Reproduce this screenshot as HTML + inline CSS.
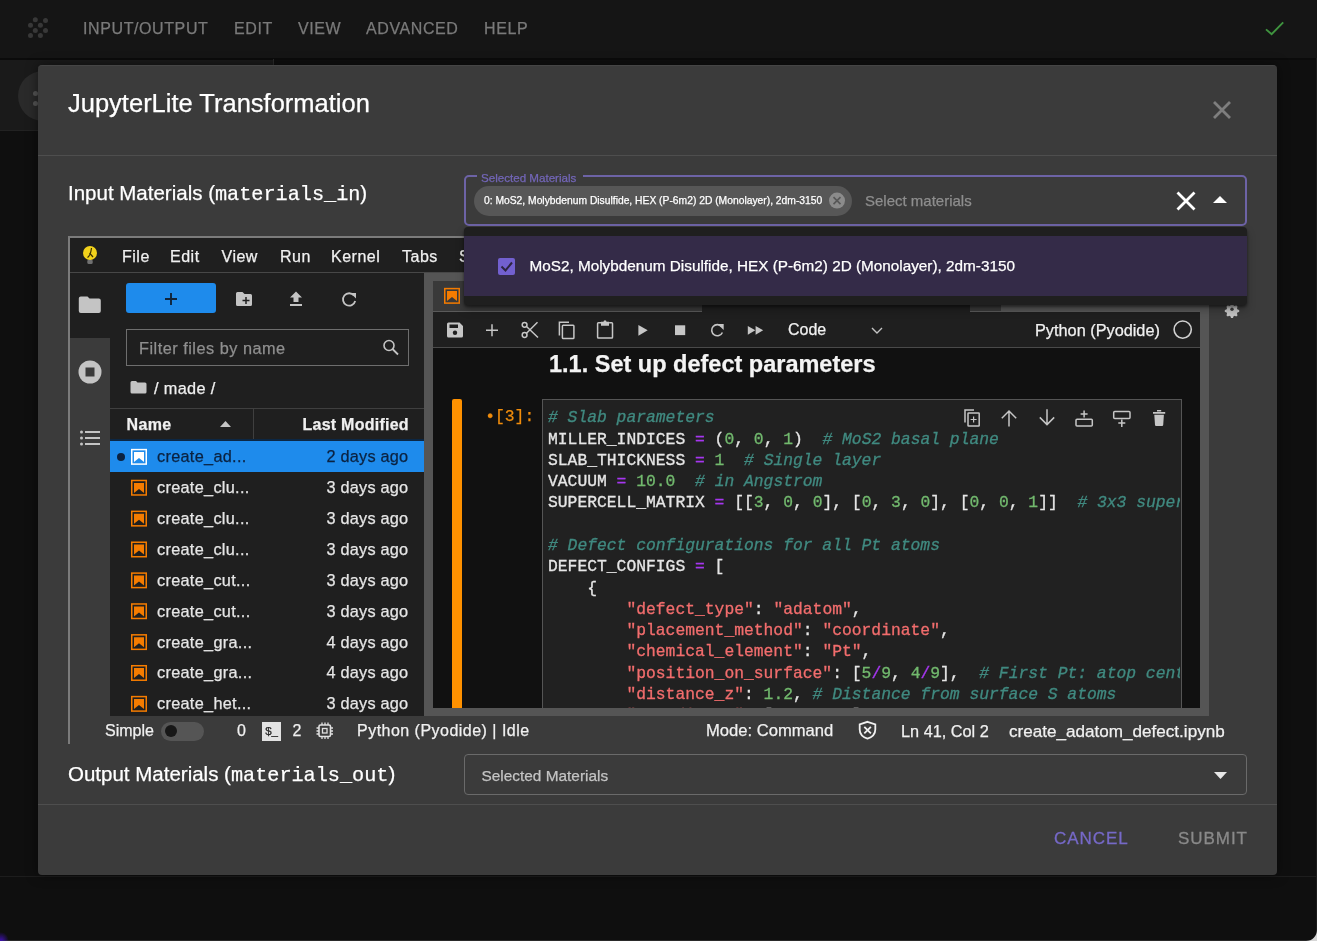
<!DOCTYPE html>
<html><head><meta charset="utf-8">
<style>
html,body{margin:0;padding:0}
body{-webkit-font-smoothing:antialiased;width:1317px;height:941px;overflow:hidden;position:relative;background:#0f0f0f;font-family:"Liberation Sans",sans-serif;color:#fff}
.a{position:absolute}
.t{position:absolute;white-space:pre;line-height:1;-webkit-text-stroke:0.25px currentColor}
#codelines{-webkit-text-stroke:0.3px currentColor}
.mono{font-family:"Liberation Mono",monospace}
.cl{height:21.27px;white-space:pre}
.c{color:#408a80;font-style:italic}
.o{color:#a637f0}
.n{color:#72b96e}
.s{color:#f26d6d}
svg{position:absolute;overflow:visible}
</style></head><body><div id="wrap" style="position:absolute;left:0;top:0;width:1317px;height:941px;will-change:transform">
<!-- background app -->
<div class="a" style="left:0;top:0;width:1317px;height:58px;background:#151515"></div>
<div class="a" style="left:0;top:58px;width:1317px;height:2px;background:#0b0b0b"></div>
<div class="a" style="left:0;top:60px;width:273px;height:70px;background:#1a1a1a"></div>
<div class="a" style="left:0;top:130px;width:273px;height:1px;background:#222"></div>
<div class="a" style="left:1316px;top:58px;width:1px;height:883px;background:#1c1c1c"></div>
<div class="a" style="left:0;top:876px;width:1317px;height:1px;background:#1d1d1d"></div>
<div class="a" style="left:0;top:940px;width:1317px;height:1px;background:#2a2a2a"></div>
<div class="a" style="left:273px;top:59px;width:1px;height:8px;background:#2c2c2c"></div>
<div class="a" style="left:18px;top:71px;width:50px;height:50px;border-radius:50%;background:#2a2a2a"></div>
<div class="a" style="left:33px;top:91px;width:5px;height:5px;border-radius:50%;background:#555"></div>
<div class="a" style="left:33px;top:101px;width:5px;height:5px;border-radius:50%;background:#555"></div>
<div id="topmenu">
<span class="t" style="left:83px;top:21px;font-size:16px;letter-spacing:0.6px;color:#7a7a7a">INPUT/OUTPUT</span>
<span class="t" style="left:234px;top:21px;font-size:16px;letter-spacing:0.6px;color:#7a7a7a">EDIT</span>
<span class="t" style="left:298px;top:21px;font-size:16px;letter-spacing:0.6px;color:#7a7a7a">VIEW</span>
<span class="t" style="left:366px;top:21px;font-size:16px;letter-spacing:0.6px;color:#7a7a7a">ADVANCED</span>
<span class="t" style="left:484px;top:21px;font-size:16px;letter-spacing:0.6px;color:#7a7a7a">HELP</span>
</div>
<svg style="left:0;top:0" width="1317" height="60">
 <g fill="#383838">
  <circle cx="35.3" cy="19.8" r="2.5"/><circle cx="45.5" cy="20.5" r="2.5"/>
  <circle cx="30.5" cy="25.3" r="2.5"/><circle cx="40.4" cy="25.3" r="2.5"/>
  <circle cx="35.3" cy="30.4" r="2.5"/><circle cx="45.5" cy="30.4" r="2.5"/>
  <circle cx="30.5" cy="35.5" r="2.5"/><circle cx="40.4" cy="35.5" r="2.5"/>
 </g>
 <path d="M1266 29.4 L1271.6 34.2 L1283.2 22.3" fill="none" stroke="#3f943f" stroke-width="1.9"/>
</svg>

<!-- modal -->
<div class="a" style="left:38px;top:64.5px;width:1239px;height:810.5px;background:#3b3b3b;border-radius:4px;box-shadow:0 0 12px rgba(0,0,0,.5);border-top:1px solid #454545;box-sizing:border-box"></div>
<span class="t" style="left:68px;top:91.3px;font-size:25.5px;color:#fff">JupyterLite Transformation</span>
<svg style="left:0;top:0" width="1317" height="200">
 <path d="M1214 102 L1230 118 M1230 102 L1214 118" stroke="#7e7e7e" stroke-width="2.8"/>
</svg>
<div class="a" style="left:38px;top:155px;width:1239px;height:1px;background:#4e4e4e"></div>
<span class="t" style="left:68px;top:183.2px;font-size:20.5px">Input Materials (<span class="mono" style="font-size:20.2px">materials_in</span>)</span>

<!-- JupyterLite iframe -->
<div class="a" style="left:68px;top:236px;width:1179px;height:2px;background:#7b7b7b"></div>
<div class="a" style="left:68px;top:236px;width:2px;height:508px;background:#7b7b7b"></div>
<!-- menubar -->
<div class="a" style="left:70px;top:238px;width:1177px;height:34px;background:#1f1f1f"></div>
<div class="a" style="left:70px;top:272px;width:1177px;height:1px;background:#474747"></div>
<svg style="left:0;top:0" width="1" height="1">
 <rect x="87.3" y="259.5" width="5.4" height="4.5" rx="1.5" fill="#707070"/>
 <circle cx="90" cy="253" r="7" fill="#f2d21b"/>
 <path d="M91.5 248 C91 252 90 256 87.5 257.5 M89.5 253 L93 257" stroke="#3a3000" stroke-width="1.2" fill="none"/>
</svg>
<span class="t" style="left:122px;top:248.5px;font-size:16px;letter-spacing:0.5px;color:#f0f0f0">File</span>
<span class="t" style="left:170px;top:248.5px;font-size:16px;letter-spacing:0.5px;color:#f0f0f0">Edit</span>
<span class="t" style="left:221.5px;top:248.5px;font-size:16px;letter-spacing:0.5px;color:#f0f0f0">View</span>
<span class="t" style="left:280px;top:248.5px;font-size:16px;letter-spacing:0.5px;color:#f0f0f0">Run</span>
<span class="t" style="left:331px;top:248.5px;font-size:16px;letter-spacing:0.5px;color:#f0f0f0">Kernel</span>
<span class="t" style="left:402px;top:248.5px;font-size:16px;letter-spacing:0.5px;color:#f0f0f0">Tabs</span>
<span class="t" style="left:459px;top:248.5px;font-size:16px;letter-spacing:0.5px;color:#f0f0f0">Settings</span>
<!-- left sidebar -->
<div class="a" style="left:70px;top:273px;width:40px;height:65px;background:#1f1f1f"></div>
<div class="a" style="left:70px;top:338px;width:40px;height:406px;background:#3b3b3b"></div>
<svg style="left:0;top:0" width="1" height="1">
 <path d="M80.8 296.6 h6.7 l2 2 h9.3 a2 2 0 0 1 2 2 v10.4 a2 2 0 0 1 -2 2 h-18 a2 2 0 0 1 -2 -2 v-12.4 a2 2 0 0 1 2 -2 z" fill="#c4c4c4"/>
 <circle cx="90" cy="372" r="11.5" fill="#c4c4c4"/>
 <rect x="85.5" y="367.5" width="9" height="9" fill="#3b3b3b"/>
 <g fill="#c4c4c4"><circle cx="81.5" cy="432" r="1.5"/><circle cx="81.5" cy="438" r="1.5"/><circle cx="81.5" cy="444" r="1.5"/>
 <rect x="85" y="431" width="15" height="2"/><rect x="85" y="437" width="15" height="2"/><rect x="85" y="443" width="15" height="2"/></g>
</svg>
<!-- file browser -->
<div class="a" style="left:110px;top:273px;width:314px;height:443px;background:#1f1f1f"></div>
<div class="a" style="left:126px;top:283px;width:90px;height:30px;background:#1e8bec;border-radius:3px"></div>
<svg style="left:0;top:0" width="1" height="1">
 <path d="M165 299 h12 M171 293 v12" stroke="#10243a" stroke-width="1.9"/>
 <path d="M237.5 292 h5 l2 2 h6 a1.5 1.5 0 0 1 1.5 1.5 v9 a1.5 1.5 0 0 1 -1.5 1.5 h-13 a1.5 1.5 0 0 1 -1.5 -1.5 v-11 a1.5 1.5 0 0 1 1.5 -1.5 z" fill="#c4c4c4"/>
 <path d="M242.5 300.5 h7 M246 297 v7" stroke="#1f1f1f" stroke-width="1.5"/>
 <path d="M296 291.5 l6 6 h-3.5 v4.5 h-5 v-4.5 h-3.5 z" fill="#c4c4c4"/>
 <rect x="290" y="304" width="12" height="2" fill="#c4c4c4"/>
 <path d="M354 295.5 A6.2 6.2 0 1 0 355.2 301" fill="none" stroke="#c4c4c4" stroke-width="1.8"/>
 <path d="M350.5 293 h5.5 v5.5 z" fill="#c4c4c4"/>
</svg>
<div class="a" style="left:126px;top:329px;width:281px;height:35px;border:1px solid #6e6e6e"></div>
<span class="t" style="left:139px;top:339.5px;font-size:16.3px;letter-spacing:0.5px;color:#8f8f8f">Filter files by name</span>
<svg style="left:0;top:0" width="1" height="1">
 <circle cx="389" cy="345.5" r="5" fill="none" stroke="#c4c4c4" stroke-width="1.6"/>
 <path d="M392.5 349 L398 354.5" stroke="#c4c4c4" stroke-width="1.8"/>
 <path d="M131 381 h5 l1.5 1.5 h7.5 a1.5 1.5 0 0 1 1.5 1.5 v8 a1.5 1.5 0 0 1 -1.5 1.5 h-13 a1.5 1.5 0 0 1 -1.5 -1.5 v-9.5 a1.5 1.5 0 0 1 1.5 -1.5 z" fill="#c4c4c4"/>
</svg>
<span class="t" style="left:154px;top:379.5px;font-size:16.3px;letter-spacing:0.35px;color:#f0f0f0">/ made /</span>
<div class="a" style="left:110px;top:408px;width:314px;height:1px;background:#3f3f3f"></div>
<div class="a" style="left:253px;top:409px;width:1px;height:31px;background:#3f3f3f"></div>
<div class="a" style="left:110px;top:439px;width:314px;height:2px;background:#0c2744"></div>
<span class="t" style="left:126.5px;top:416.5px;font-size:16px;font-weight:bold;letter-spacing:0.35px;color:#f0f0f0">Name</span>
<svg style="left:0;top:0" width="1" height="1"><path d="M220 427 h11 l-5.5 -6 z" fill="#c4c4c4"/></svg>
<span class="t" style="left:302.5px;top:416.5px;font-size:16px;font-weight:bold;letter-spacing:0.25px;color:#f0f0f0">Last Modified</span>
<div class="a" style="left:110px;top:441.000px;width:314px;height:30.875px;background:#1e8bec"></div>
<div class="a" style="left:117px;top:452.500px;width:8px;height:8px;border-radius:50%;background:#0b2240"></div>
<svg style="left:0;top:0" width="1" height="1"><rect x="131.75" y="449.60" width="14.5" height="14.5" fill="none" stroke="#fff" stroke-width="1.5"/><path d="M134 452.00 h10 v10 l-5 -4 l-5 4 z" fill="#fff"/></svg>
<span class="t" style="left:157px;top:448.300px;font-size:16.3px;letter-spacing:0.3px;color:#0b2240">create_ad...</span>
<span class="t" style="left:326.6px;top:448.300px;font-size:16.3px;letter-spacing:0.2px;color:#0b2240">2 days ago</span>
<svg style="left:0;top:0" width="1" height="1"><rect x="131.75" y="480.48" width="14.5" height="14.5" fill="none" stroke="#f57c00" stroke-width="1.5"/><path d="M134 482.88 h10 v10 l-5 -4 l-5 4 z" fill="#f57c00"/></svg>
<span class="t" style="left:157px;top:479.175px;font-size:16.3px;letter-spacing:0.3px;color:#e6e6e6">create_clu...</span>
<span class="t" style="left:326.6px;top:479.175px;font-size:16.3px;letter-spacing:0.2px;color:#e6e6e6">3 days ago</span>
<svg style="left:0;top:0" width="1" height="1"><rect x="131.75" y="511.35" width="14.5" height="14.5" fill="none" stroke="#f57c00" stroke-width="1.5"/><path d="M134 513.75 h10 v10 l-5 -4 l-5 4 z" fill="#f57c00"/></svg>
<span class="t" style="left:157px;top:510.050px;font-size:16.3px;letter-spacing:0.3px;color:#e6e6e6">create_clu...</span>
<span class="t" style="left:326.6px;top:510.050px;font-size:16.3px;letter-spacing:0.2px;color:#e6e6e6">3 days ago</span>
<svg style="left:0;top:0" width="1" height="1"><rect x="131.75" y="542.23" width="14.5" height="14.5" fill="none" stroke="#f57c00" stroke-width="1.5"/><path d="M134 544.62 h10 v10 l-5 -4 l-5 4 z" fill="#f57c00"/></svg>
<span class="t" style="left:157px;top:540.925px;font-size:16.3px;letter-spacing:0.3px;color:#e6e6e6">create_clu...</span>
<span class="t" style="left:326.6px;top:540.925px;font-size:16.3px;letter-spacing:0.2px;color:#e6e6e6">3 days ago</span>
<svg style="left:0;top:0" width="1" height="1"><rect x="131.75" y="573.10" width="14.5" height="14.5" fill="none" stroke="#f57c00" stroke-width="1.5"/><path d="M134 575.50 h10 v10 l-5 -4 l-5 4 z" fill="#f57c00"/></svg>
<span class="t" style="left:157px;top:571.800px;font-size:16.3px;letter-spacing:0.3px;color:#e6e6e6">create_cut...</span>
<span class="t" style="left:326.6px;top:571.800px;font-size:16.3px;letter-spacing:0.2px;color:#e6e6e6">3 days ago</span>
<svg style="left:0;top:0" width="1" height="1"><rect x="131.75" y="603.98" width="14.5" height="14.5" fill="none" stroke="#f57c00" stroke-width="1.5"/><path d="M134 606.38 h10 v10 l-5 -4 l-5 4 z" fill="#f57c00"/></svg>
<span class="t" style="left:157px;top:602.675px;font-size:16.3px;letter-spacing:0.3px;color:#e6e6e6">create_cut...</span>
<span class="t" style="left:326.6px;top:602.675px;font-size:16.3px;letter-spacing:0.2px;color:#e6e6e6">3 days ago</span>
<svg style="left:0;top:0" width="1" height="1"><rect x="131.75" y="634.85" width="14.5" height="14.5" fill="none" stroke="#f57c00" stroke-width="1.5"/><path d="M134 637.25 h10 v10 l-5 -4 l-5 4 z" fill="#f57c00"/></svg>
<span class="t" style="left:157px;top:633.550px;font-size:16.3px;letter-spacing:0.3px;color:#e6e6e6">create_gra...</span>
<span class="t" style="left:326.6px;top:633.550px;font-size:16.3px;letter-spacing:0.2px;color:#e6e6e6">4 days ago</span>
<svg style="left:0;top:0" width="1" height="1"><rect x="131.75" y="665.73" width="14.5" height="14.5" fill="none" stroke="#f57c00" stroke-width="1.5"/><path d="M134 668.12 h10 v10 l-5 -4 l-5 4 z" fill="#f57c00"/></svg>
<span class="t" style="left:157px;top:664.425px;font-size:16.3px;letter-spacing:0.3px;color:#e6e6e6">create_gra...</span>
<span class="t" style="left:326.6px;top:664.425px;font-size:16.3px;letter-spacing:0.2px;color:#e6e6e6">4 days ago</span>
<svg style="left:0;top:0" width="1" height="1"><rect x="131.75" y="696.60" width="14.5" height="14.5" fill="none" stroke="#f57c00" stroke-width="1.5"/><path d="M134 699.00 h10 v10 l-5 -4 l-5 4 z" fill="#f57c00"/></svg>
<span class="t" style="left:157px;top:695.300px;font-size:16.3px;letter-spacing:0.3px;color:#e6e6e6">create_het...</span>
<span class="t" style="left:326.6px;top:695.300px;font-size:16.3px;letter-spacing:0.2px;color:#e6e6e6">3 days ago</span>
<!-- splitter / tab bar -->
<div class="a" style="left:424px;top:273px;width:785px;height:8px;background:#555"></div>
<div class="a" style="left:424px;top:273px;width:9px;height:443px;background:#555"></div>
<div class="a" style="left:433px;top:281px;width:269px;height:30px;background:#393939"></div>
<div class="a" style="left:702px;top:281px;width:268px;height:31px;background:#1f1f1f"></div>
<div class="a" style="left:970px;top:281px;width:31px;height:30px;background:#393939"></div>
<div class="a" style="left:1001px;top:281px;width:208px;height:30px;background:#555"></div>
<div class="a" style="left:433px;top:311px;width:269px;height:1px;background:#5a5a5a"></div>
<div class="a" style="left:970px;top:311px;width:239px;height:1px;background:#5a5a5a"></div>
<svg style="left:0;top:0" width="1" height="1"><rect x="444.75" y="288.6" width="14.5" height="14.5" fill="none" stroke="#f57c00" stroke-width="1.5"/><path d="M447 291 h10 v10 l-5 -4 l-5 4 z" fill="#f57c00"/></svg>
<!-- toolbar -->
<div class="a" style="left:433px;top:312px;width:767px;height:35px;background:#1f1f1f"></div>
<div class="a" style="left:433px;top:347px;width:767px;height:1px;background:#4a4a4a"></div>
<div class="a" style="left:1200px;top:281px;width:9px;height:435px;background:#555"></div>
<svg style="left:0;top:0" width="1" height="1">
 <g fill="#c6c6c6">
  <!-- save 447-463 x 322.5-337.5 -->
  <path d="M448.5 322.5 h11 l3.5 3.5 v10 a1.5 1.5 0 0 1 -1.5 1.5 h-13 a1.5 1.5 0 0 1 -1.5 -1.5 v-12 a1.5 1.5 0 0 1 1.5 -1.5 z"/>
 </g>
 <rect x="449.5" y="324.5" width="8.5" height="3.5" fill="#1f1f1f"/>
 <circle cx="455" cy="332.8" r="2.2" fill="#1f1f1f"/>
 <path d="M486 330.2 h12 M492 324.2 v12" stroke="#c6c6c6" stroke-width="1.5"/>
 <!-- scissors 521.7-538.4, 321.8-338 -->
 <g fill="none" stroke="#c6c6c6" stroke-width="1.5">
  <circle cx="524.6" cy="324.8" r="2.4"/>
  <circle cx="524.6" cy="335" r="2.4"/>
  <path d="M526.5 326.5 L538 337.5 M526.5 333.3 L537.5 322.3"/>
 </g>
 <!-- copy 558.6-574.6 321-339.3 -->
 <g fill="none" stroke="#c6c6c6" stroke-width="1.5">
  <path d="M559.4 335.5 v-13.2 h9.6"/>
  <rect x="562.4" y="325.2" width="11.5" height="13.3" rx="0.8"/>
 </g>
 <!-- paste 597.2-612.9 320.2-338.2 -->
 <g fill="none" stroke="#c6c6c6" stroke-width="1.5">
  <path d="M601 322.8 h-2.6 a0.8 0.8 0 0 0 -0.8 0.8 v13.6 a0.8 0.8 0 0 0 0.8 0.8 h13.3 a0.8 0.8 0 0 0 0.8 -0.8 v-13.6 a0.8 0.8 0 0 0 -0.8 -0.8 h-2.6"/>
 </g>
 <path d="M601 321.8 h2.5 a1.5 1.5 0 0 1 3 0 h2.5 v4 h-8 z" fill="#c6c6c6"/>
 <!-- play -->
 <path d="M638.4 324.9 L647.7 330.3 L638.4 335.7 Z" fill="#c6c6c6"/>
 <rect x="675" y="325.3" width="10.2" height="9.8" fill="#c6c6c6"/>
 <!-- restart 709.9-723.7 323.9-336.7 -->
 <path d="M721.6 326.6 A5.6 5.6 0 1 0 722.4 332.5" fill="none" stroke="#c6c6c6" stroke-width="1.6"/>
 <path d="M717.5 323.9 h6.2 v6.2 z" fill="#c6c6c6"/>
 <!-- ff -->
 <path d="M747.8 325.9 L755.3 330.3 L747.8 334.7 Z M755.6 325.9 L763.2 330.3 L755.6 334.7 Z" fill="#c6c6c6"/>
</svg>
<span class="t" style="left:788px;top:322.2px;font-size:16px;color:#f0f0f0">Code</span>
<span class="t" style="left:1035px;top:321.5px;font-size:16.3px;color:#f0f0f0">Python (Pyodide)</span>
<svg style="left:0;top:0" width="1" height="1">
 <path d="M872 328 l5 5 l5 -5" fill="none" stroke="#c4c4c4" stroke-width="1.4"/>
 <circle cx="1182.7" cy="329.6" r="8.6" fill="none" stroke="#d0d0d0" stroke-width="1.6"/>
</svg>
<!-- notebook content -->
<div class="a" style="left:433px;top:348px;width:767px;height:360px;background:#111"></div>
<div class="a" style="left:433px;top:708px;width:776px;height:8px;background:#555"></div>
<span class="t" style="left:549px;top:353px;font-size:23.5px;font-weight:bold;color:#f4f4f4">1.1. Set up defect parameters</span>
<div class="a" style="left:452px;top:399px;width:10px;height:309px;background:#ff9100;border-radius:2px 2px 0 0"></div>
<div class="a" style="left:433px;top:348px;width:767px;height:360px;overflow:hidden">
<div class="a" style="left:109px;top:51px;width:640px;height:340px;background:#212121;border:1px solid #555;box-sizing:border-box"></div>
<span class="t mono" style="left:52.2px;top:61px;font-size:16.33px;color:#f08c0c">&#8226;[3]:</span>
<div class="a mono" id="codelines" style="left:115px;top:59.4px;width:632px;height:320px;overflow:hidden;font-size:16.33px;line-height:21.27px;color:#e6e6e6">
<div class="cl"><span class="c"># Slab parameters</span></div>
<div class="cl"><span class="v">MILLER_INDICES </span><span class="o">=</span> (<span class="n">0</span>, <span class="n">0</span>, <span class="n">1</span>)  <span class="c"># MoS2 basal plane</span></div>
<div class="cl"><span class="v">SLAB_THICKNESS </span><span class="o">=</span> <span class="n">1</span>  <span class="c"># Single layer</span></div>
<div class="cl"><span class="v">VACUUM </span><span class="o">=</span> <span class="n">10.0</span>  <span class="c"># in Angstrom</span></div>
<div class="cl"><span class="v">SUPERCELL_MATRIX </span><span class="o">=</span> [[<span class="n">3</span>, <span class="n">0</span>, <span class="n">0</span>], [<span class="n">0</span>, <span class="n">3</span>, <span class="n">0</span>], [<span class="n">0</span>, <span class="n">0</span>, <span class="n">1</span>]]  <span class="c"># 3x3 supercell</span></div>
<div class="cl"></div>
<div class="cl"><span class="c"># Defect configurations for all Pt atoms</span></div>
<div class="cl"><span class="v">DEFECT_CONFIGS </span><span class="o">=</span> [</div>
<div class="cl">    {</div>
<div class="cl">        <span class="s">"defect_type"</span>: <span class="s">"adatom"</span>,</div>
<div class="cl">        <span class="s">"placement_method"</span>: <span class="s">"coordinate"</span>,</div>
<div class="cl">        <span class="s">"chemical_element"</span>: <span class="s">"Pt"</span>,</div>
<div class="cl">        <span class="s">"position_on_surface"</span>: [<span class="n">5</span><span class="o">/</span><span class="n">9</span>, <span class="n">4</span><span class="o">/</span><span class="n">9</span>],  <span class="c"># First Pt: atop center</span></div>
<div class="cl">        <span class="s">"distance_z"</span>: <span class="n">1.2</span>, <span class="c"># Distance from surface S atoms</span></div>
<div class="cl">        <span class="s">"coordinate"</span>: [<span class="n">0.5</span>, <span class="n">0.5</span>],</div>
</div>
</div>
<!-- right sidebar gear -->
<svg style="left:0;top:0" width="1" height="1"><g transform="translate(1232 309.2) scale(0.78)" fill="#c4c4c4">
 <path d="M-1.3 -7 h2.6 l0.5 2 l1.7 0.9 l1.9 -0.9 l1.8 1.8 l-0.9 1.9 l0.9 1.7 l2 0.5 v2.6 l-2 0.5 l-0.9 1.7 l0.9 1.9 l-1.8 1.8 l-1.9 -0.9 l-1.7 0.9 l-0.5 2 h-2.6 l-0.5 -2 l-1.7 -0.9 l-1.9 0.9 l-1.8 -1.8 l0.9 -1.9 l-0.9 -1.7 l-2 -0.5 v-2.6 l2 -0.5 l0.9 -1.7 l-0.9 -1.9 l1.8 -1.8 l1.9 0.9 l1.7 -0.9 z"/>
 <circle r="2.2" fill="#3b3b3b"/></g></svg>
<svg style="left:0;top:0" width="1" height="1"> <!-- cell toolbar -->
 <g fill="none" stroke="#c6c6c6" stroke-width="1.5">
  <path d="M965 422.5 v-12.5 h9"/>
  <rect x="968" y="413" width="11.2" height="13" rx="0.6"/>
  <path d="M970.6 419.5 h6 M973.6 416.5 v6" stroke-width="1.2"/>
  <path d="M1009 426.4 V411 M1001.8 418.2 L1009 411 L1016.2 418.2"/>
  <path d="M1047 409.2 V424.6 M1039.8 417.4 L1047 424.6 L1054.2 417.4"/>
  <rect x="1076" y="419.2" width="16.3" height="6.8" rx="1"/>
  <path d="M1084.1 410.4 v7 M1080.6 413.9 h7"/>
  <rect x="1113.7" y="411.6" width="16.3" height="6.8" rx="1"/>
  <path d="M1121.8 419.5 v7.5 M1118.3 423 h7"/>
 </g>
 <path d="M1153 412 h12.2 v1.8 h-12.2 z M1157 410 h4.2 v1.5 h-4.2 z M1154.3 414.8 h9.6 l-0.7 10.3 a0.8 0.8 0 0 1 -0.8 0.8 h-6.6 a0.8 0.8 0 0 1 -0.8 -0.8 z" fill="#c6c6c6"/>
</svg>
<!-- status bar -->
<span class="t" style="left:105px;top:722.7px;font-size:16px;color:#f0f0f0">Simple</span>
<div class="a" style="left:161px;top:721.5px;width:43px;height:19px;border-radius:10px;background:#555"></div>
<div class="a" style="left:164.5px;top:725px;width:12px;height:12px;border-radius:50%;background:#171717"></div>
<span class="t" style="left:237px;top:722.7px;font-size:16px;color:#f0f0f0">0</span>
<div class="a" style="left:262px;top:722px;width:18.5px;height:18.5px;background:#e2e2e2"></div>
<span class="t" style="left:265.2px;top:725.5px;font-size:11.5px;color:#222">$_</span>
<span class="t" style="left:292.5px;top:722.7px;font-size:16px;color:#f0f0f0">2</span>
<svg style="left:0;top:0" width="1" height="1">
 <rect x="319" y="725" width="11.5" height="11.5" rx="1.5" fill="none" stroke="#e0e0e0" stroke-width="1.6"/>
 <rect x="322.5" y="728.5" width="4.5" height="4.5" fill="none" stroke="#e0e0e0" stroke-width="1.3"/>
 <path d="M322 722.5 v2.5 M325 722.5 v2.5 M328 722.5 v2.5 M322 736.5 v2.5 M325 736.5 v2.5 M328 736.5 v2.5 M316.5 728 h2.5 M316.5 731 h2.5 M316.5 734 h2.5 M330.5 728 h2.5 M330.5 731 h2.5 M330.5 734 h2.5" stroke="#e0e0e0" stroke-width="1.3"/>
</svg>
<span class="t" style="left:357px;top:722.8px;font-size:16px;letter-spacing:0.48px;color:#f0f0f0">Python (Pyodide) | Idle</span>
<span class="t" style="left:706px;top:723.0px;font-size:16.6px;color:#f0f0f0">Mode: Command</span>
<svg style="left:0;top:0" width="1" height="1">
 <path d="M867.5 721.8 l7.8 2.6 v5 c0 4.5 -3.5 7.7 -7.8 9.2 c-4.3 -1.5 -7.8 -4.7 -7.8 -9.2 v-5 z" fill="none" stroke="#f0f0f0" stroke-width="1.8"/>
 <path d="M864.3 726.8 l6.6 6.6 M870.9 726.8 l-6.6 6.6" stroke="#f0f0f0" stroke-width="1.8"/>
</svg>
<span class="t" style="left:901px;top:723.0px;font-size:16.3px;color:#f0f0f0">Ln 41, Col 2</span>
<span class="t" style="left:1009px;top:723.0px;font-size:17.1px;color:#f0f0f0">create_adatom_defect.ipynb</span>


<!-- output -->
<span class="t" style="left:68px;top:763.8px;font-size:20.5px">Output Materials (<span class="mono" style="font-size:20.2px">materials_out</span>)</span>
<div class="a" style="left:464px;top:754px;width:781px;height:39px;border:1px solid #6a6a6a;border-radius:4px"></div>
<span class="t" style="left:481.5px;top:767.8px;font-size:15.4px;color:#c4c4c4">Selected Materials</span>
<svg style="left:0;top:0" width="1317" height="941">
 <path d="M1214 772 L1227 772 L1220.5 779 Z" fill="#e8e8e8"/>
</svg>
<div class="a" style="left:38px;top:804px;width:1239px;height:1px;background:#4e4e4e"></div>
<span class="t" style="left:1054px;top:830.4px;font-size:17px;letter-spacing:0.95px;color:#7669c8;-webkit-text-stroke:0.3px #7669c8">CANCEL</span>
<span class="t" style="left:1178px;top:830.4px;font-size:17px;letter-spacing:0.95px;color:#8a8a8a;-webkit-text-stroke:0.3px #8a8a8a">SUBMIT</span>

<!-- select field -->
<div class="a" style="left:464px;top:175px;width:779px;height:47px;border:2px solid #6d63a6;border-radius:5px"></div>
<div class="a" style="left:477px;top:170px;width:106px;height:10px;background:#3b3b3b"></div>
<span class="t" style="left:481px;top:171.5px;font-size:11.6px;color:#7366b8">Selected Materials</span>
<div class="a" style="left:474px;top:186px;width:378px;height:30px;border-radius:15px;background:#575757"></div>
<span class="t" style="left:484px;top:196px;font-size:10.3px;color:#fff">0: MoS2, Molybdenum Disulfide, HEX (P-6m2) 2D (Monolayer), 2dm-3150</span>
<svg style="left:0;top:0" width="1317" height="941">
 <circle cx="837" cy="200.6" r="8" fill="#8b8b8b"/>
 <path d="M833.5 197.1 L840.5 204.1 M840.5 197.1 L833.5 204.1" stroke="#575757" stroke-width="1.6"/>
 <path d="M1177.5 192.5 L1194.5 209.5 M1194.5 192.5 L1177.5 209.5" stroke="#fff" stroke-width="2.8"/>
 <path d="M1213 203 L1227 203 L1220 196 Z" fill="#fff"/>
</svg>
<span class="t" style="left:865px;top:192.8px;font-size:15px;color:#8e8e8e">Select materials</span>
<!-- dropdown -->
<div class="a" style="left:464px;top:227px;width:783px;height:78px;background:#1f1f1f;border-radius:4px;box-shadow:0 2px 3px rgba(0,0,0,.45),0 5px 8px rgba(0,0,0,.25)"></div>
<div class="a" style="left:464px;top:236px;width:783px;height:60px;background:#342b48"></div>
<div class="a" style="left:498px;top:258px;width:17px;height:17px;background:#7260cf;border-radius:2px"></div>
<svg style="left:0;top:0" width="1317" height="941">
 <path d="M501.5 266.5 L505.5 270.5 L512 262.5" fill="none" stroke="#2d2540" stroke-width="2"/>
</svg>
<span class="t" style="left:529.5px;top:257.8px;font-size:15.3px;color:#fff">MoS2, Molybdenum Disulfide, HEX (P-6m2) 2D (Monolayer), 2dm-3150</span>

<div class="a" style="left:-7px;top:932px;width:16px;height:18px;border-radius:50%;background:radial-gradient(closest-side,#3f12b0,rgba(50,15,130,0))"></div>
<svg style="left:0;top:0" width="1" height="1"><path d="M1317 930 L1317 941 L1306 941 A11 11 0 0 0 1317 930 Z" fill="#d6d6d6"/></svg>
</div></body></html>
